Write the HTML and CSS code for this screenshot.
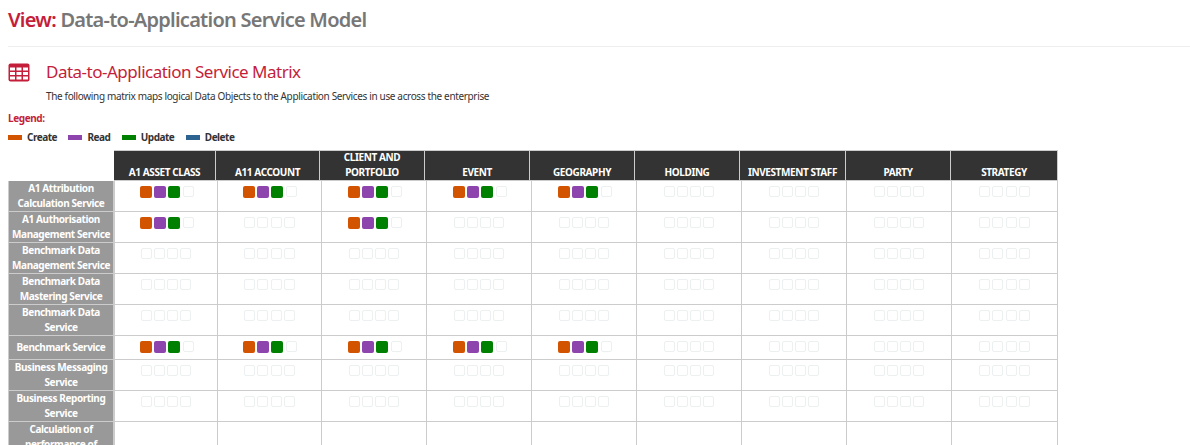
FILE: index.html
```html
<!DOCTYPE html>
<html lang="en">
<head>
<meta charset="utf-8">
<title>Data-to-Application Service Model</title>
<link rel="stylesheet" href="styles.css">
</head>
<body>
<h1 class="view-title"><span class="view-label">View:</span> Data-to-Application Service Model</h1>
<hr class="rule">
<div class="section-head">
  <svg class="table-icon" viewBox="0 0 22 19" width="22" height="19" aria-hidden="true">
    <rect x="0.5" y="0.5" width="21" height="18" rx="2" fill="#c41e3a"/>
    <g fill="#fff">
      <rect x="2" y="4.5" width="5" height="3"/><rect x="8.5" y="4.5" width="5" height="3"/><rect x="15" y="4.5" width="5" height="3"/>
      <rect x="2" y="9" width="5" height="3"/><rect x="8.5" y="9" width="5" height="3"/><rect x="15" y="9" width="5" height="3"/>
      <rect x="2" y="13.5" width="5" height="3"/><rect x="8.5" y="13.5" width="5" height="3"/><rect x="15" y="13.5" width="5" height="3"/>
    </g>
  </svg>
  <div>
    <h2 class="section-title">Data-to-Application Service Matrix</h2>
    <p class="section-desc">The following matrix maps logical Data Objects to the Application Services in use across the enterprise</p>
  </div>
</div>
<div class="legend-label">Legend:</div>
<div class="legend">
  <span class="legend-item"><i class="swatch create"></i>Create</span>
  <span class="legend-item"><i class="swatch read"></i>Read</span>
  <span class="legend-item"><i class="swatch update"></i>Update</span>
  <span class="legend-item"><i class="swatch delete"></i>Delete</span>
</div>
<div class="matrix">
  <div class="head-row">
    <div class="th">A1 ASSET CLASS</div><div class="th">A11 ACCOUNT</div><div class="th">CLIENT AND PORTFOLIO</div><div class="th">EVENT</div><div class="th">GEOGRAPHY</div><div class="th">HOLDING</div><div class="th">INVESTMENT STAFF</div><div class="th">PARTY</div><div class="th">STRATEGY</div>
  </div>
  <div class="row"><div class="rh">A1 Attribution Calculation Service</div>
    <div class="td"><div class="boxes on"><i></i><i></i><i></i><i></i></div></div><div class="td"><div class="boxes on"><i></i><i></i><i></i><i></i></div></div><div class="td"><div class="boxes on"><i></i><i></i><i></i><i></i></div></div><div class="td"><div class="boxes on"><i></i><i></i><i></i><i></i></div></div><div class="td"><div class="boxes on"><i></i><i></i><i></i><i></i></div></div><div class="td"><div class="boxes"><i></i><i></i><i></i><i></i></div></div><div class="td"><div class="boxes"><i></i><i></i><i></i><i></i></div></div><div class="td"><div class="boxes"><i></i><i></i><i></i><i></i></div></div><div class="td"><div class="boxes"><i></i><i></i><i></i><i></i></div></div>
  </div>
  <div class="row"><div class="rh">A1 Authorisation Management Service</div>
    <div class="td"><div class="boxes on"><i></i><i></i><i></i><i></i></div></div><div class="td"><div class="boxes"><i></i><i></i><i></i><i></i></div></div><div class="td"><div class="boxes on"><i></i><i></i><i></i><i></i></div></div><div class="td"><div class="boxes"><i></i><i></i><i></i><i></i></div></div><div class="td"><div class="boxes"><i></i><i></i><i></i><i></i></div></div><div class="td"><div class="boxes"><i></i><i></i><i></i><i></i></div></div><div class="td"><div class="boxes"><i></i><i></i><i></i><i></i></div></div><div class="td"><div class="boxes"><i></i><i></i><i></i><i></i></div></div><div class="td"><div class="boxes"><i></i><i></i><i></i><i></i></div></div>
  </div>
  <div class="row"><div class="rh">Benchmark Data Management Service</div>
    <div class="td"><div class="boxes"><i></i><i></i><i></i><i></i></div></div><div class="td"><div class="boxes"><i></i><i></i><i></i><i></i></div></div><div class="td"><div class="boxes"><i></i><i></i><i></i><i></i></div></div><div class="td"><div class="boxes"><i></i><i></i><i></i><i></i></div></div><div class="td"><div class="boxes"><i></i><i></i><i></i><i></i></div></div><div class="td"><div class="boxes"><i></i><i></i><i></i><i></i></div></div><div class="td"><div class="boxes"><i></i><i></i><i></i><i></i></div></div><div class="td"><div class="boxes"><i></i><i></i><i></i><i></i></div></div><div class="td"><div class="boxes"><i></i><i></i><i></i><i></i></div></div>
  </div>
  <div class="row"><div class="rh">Benchmark Data Mastering Service</div>
    <div class="td"><div class="boxes"><i></i><i></i><i></i><i></i></div></div><div class="td"><div class="boxes"><i></i><i></i><i></i><i></i></div></div><div class="td"><div class="boxes"><i></i><i></i><i></i><i></i></div></div><div class="td"><div class="boxes"><i></i><i></i><i></i><i></i></div></div><div class="td"><div class="boxes"><i></i><i></i><i></i><i></i></div></div><div class="td"><div class="boxes"><i></i><i></i><i></i><i></i></div></div><div class="td"><div class="boxes"><i></i><i></i><i></i><i></i></div></div><div class="td"><div class="boxes"><i></i><i></i><i></i><i></i></div></div><div class="td"><div class="boxes"><i></i><i></i><i></i><i></i></div></div>
  </div>
  <div class="row"><div class="rh">Benchmark Data Service</div>
    <div class="td"><div class="boxes"><i></i><i></i><i></i><i></i></div></div><div class="td"><div class="boxes"><i></i><i></i><i></i><i></i></div></div><div class="td"><div class="boxes"><i></i><i></i><i></i><i></i></div></div><div class="td"><div class="boxes"><i></i><i></i><i></i><i></i></div></div><div class="td"><div class="boxes"><i></i><i></i><i></i><i></i></div></div><div class="td"><div class="boxes"><i></i><i></i><i></i><i></i></div></div><div class="td"><div class="boxes"><i></i><i></i><i></i><i></i></div></div><div class="td"><div class="boxes"><i></i><i></i><i></i><i></i></div></div><div class="td"><div class="boxes"><i></i><i></i><i></i><i></i></div></div>
  </div>
  <div class="row single"><div class="rh">Benchmark Service</div>
    <div class="td"><div class="boxes on"><i></i><i></i><i></i><i></i></div></div><div class="td"><div class="boxes on"><i></i><i></i><i></i><i></i></div></div><div class="td"><div class="boxes on"><i></i><i></i><i></i><i></i></div></div><div class="td"><div class="boxes on"><i></i><i></i><i></i><i></i></div></div><div class="td"><div class="boxes on"><i></i><i></i><i></i><i></i></div></div><div class="td"><div class="boxes"><i></i><i></i><i></i><i></i></div></div><div class="td"><div class="boxes"><i></i><i></i><i></i><i></i></div></div><div class="td"><div class="boxes"><i></i><i></i><i></i><i></i></div></div><div class="td"><div class="boxes"><i></i><i></i><i></i><i></i></div></div>
  </div>
  <div class="row"><div class="rh">Business Messaging Service</div>
    <div class="td"><div class="boxes"><i></i><i></i><i></i><i></i></div></div><div class="td"><div class="boxes"><i></i><i></i><i></i><i></i></div></div><div class="td"><div class="boxes"><i></i><i></i><i></i><i></i></div></div><div class="td"><div class="boxes"><i></i><i></i><i></i><i></i></div></div><div class="td"><div class="boxes"><i></i><i></i><i></i><i></i></div></div><div class="td"><div class="boxes"><i></i><i></i><i></i><i></i></div></div><div class="td"><div class="boxes"><i></i><i></i><i></i><i></i></div></div><div class="td"><div class="boxes"><i></i><i></i><i></i><i></i></div></div><div class="td"><div class="boxes"><i></i><i></i><i></i><i></i></div></div>
  </div>
  <div class="row"><div class="rh">Business Reporting Service</div>
    <div class="td"><div class="boxes"><i></i><i></i><i></i><i></i></div></div><div class="td"><div class="boxes"><i></i><i></i><i></i><i></i></div></div><div class="td"><div class="boxes"><i></i><i></i><i></i><i></i></div></div><div class="td"><div class="boxes"><i></i><i></i><i></i><i></i></div></div><div class="td"><div class="boxes"><i></i><i></i><i></i><i></i></div></div><div class="td"><div class="boxes"><i></i><i></i><i></i><i></i></div></div><div class="td"><div class="boxes"><i></i><i></i><i></i><i></i></div></div><div class="td"><div class="boxes"><i></i><i></i><i></i><i></i></div></div><div class="td"><div class="boxes"><i></i><i></i><i></i><i></i></div></div>
  </div>
  <div class="row last"><div class="rh">Calculation of performance of</div>
    <div class="td"></div><div class="td"></div><div class="td"></div><div class="td"></div><div class="td"></div><div class="td"></div><div class="td"></div><div class="td"></div><div class="td"></div>
  </div>
</div>
</body>
</html>
```

FILE: styles.css
```css
html, body { margin: 0; padding: 0; background: #fff; overflow: hidden; height: 445px; }
body { font-family: "Noto Sans", "Open Sans", sans-serif; color: #333; padding-left: 8px; }
.view-title { margin: 0; padding-top: 7px; font-size: 20px; line-height: 26px; font-weight: 600; color: #777; letter-spacing: -0.75px; }
.view-label { color: #c41e3a; }
.rule { margin: 13px 0 0; border: 0; border-top: 1px solid #eee; }
.section-head { display: flex; margin-top: 14px; }
.table-icon { flex: none; margin-top: 2px; margin-right: 16px; }
.section-title { margin: 0; font-size: 17px; line-height: 22px; font-weight: 400; color: #c41e3a; letter-spacing: -0.5px; }
.section-desc { margin: 6px 0 0; font-size: 10px; line-height: 14px; color: #333; letter-spacing: -0.35px; }
.legend-label { margin-top: 8px; font-size: 10px; line-height: 14px; font-weight: 700; color: #c41e3a; letter-spacing: -0.4px; }
.legend { display: flex; gap: 11.5px; margin-top: 5px; height: 14px; align-items: center; }
.legend-item { display: flex; align-items: center; font-size: 10px; font-weight: 700; color: #333; letter-spacing: -0.5px; }
.swatch { width: 14px; height: 5px; margin-right: 5px; }
.swatch.create { background: #d35400; }
.swatch.read { background: #8e44ad; }
.swatch.update { background: #008000; }
.swatch.delete { background: #2c6391; }
.matrix { margin-top: 6px; width: 1050px; }
.head-row { display: flex; height: 31px; margin-left: 106px; border-top: 1px solid #ccc; border-bottom: 1px solid #ccc; box-sizing: border-box; }
.th { background: #333; color: #fff; font-size: 10px; line-height: 15px; font-weight: 700; letter-spacing: -0.4px; text-align: center; display: flex; align-items: flex-end; justify-content: center; box-sizing: border-box; border-left: 1px solid #ccc; width: 105px; }
.th:nth-child(1) { width: 101px; border-left: 0; }
.th:nth-child(2) { width: 104px; }
.th:nth-child(7) { width: 106px; }
.th:nth-child(9) { width: 108px; border-right: 1px solid #ccc; }
.row { display: flex; height: 31px; box-sizing: border-box; border-bottom: 1px solid #ccc; }
.row.single { height: 24px; }
.row.last { height: 46px; border-bottom: 0; }
.rh { width: 107px; flex: none; box-sizing: border-box; background: #999; color: #fff; font-size: 10px; line-height: 15px; font-weight: 700; letter-spacing: -0.4px; text-align: center; border-left: 1px solid #ccc; border-right: 2px solid #ccc; display: flex; align-items: center; justify-content: center; }
.row.last .rh { align-items: flex-start; }
.td { width: 105px; flex: none; box-sizing: border-box; border-left: 1px solid #ccc; }
.td:nth-child(2) { width: 102px; border-left: 0; }
.td:nth-child(3) { width: 104px; }
.td:last-child { border-right: 1px solid #ccc; width: 107px; }
.boxes { display: flex; justify-content: center; gap: 2.33px; padding-top: 5px; }
.boxes i { width: 11px; height: 11px; box-sizing: border-box; border: 1.5px solid #ecf0f1; border-radius: 2px; }
.boxes.on { gap: 2px; padding-left: 1px; }
.boxes.on i { width: 12px; height: 12px; border: 0; }
.boxes.on i:nth-child(1) { background: #d35400; }
.boxes.on i:nth-child(2) { background: #8e44ad; }
.boxes.on i:nth-child(3) { background: #008000; }
.boxes.on i:nth-child(4) { width: 11px; height: 11px; margin-left: 1px; border: 1.5px solid #ecf0f1; }
```
